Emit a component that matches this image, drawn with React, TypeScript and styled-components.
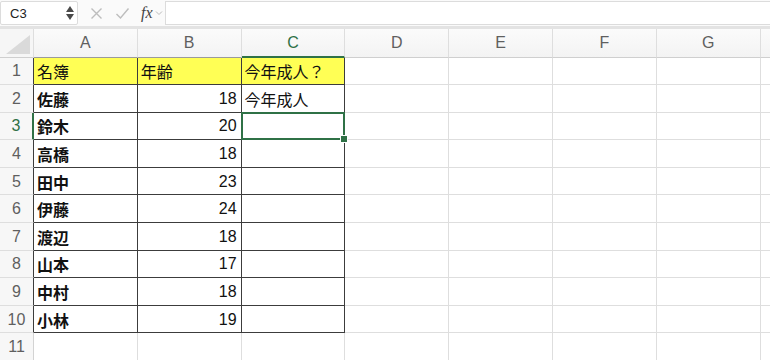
import styled, { createGlobalStyle, css } from 'styled-components';

const GlobalStyle = createGlobalStyle`
  html, body {
    margin: 0;
    padding: 0;
    background: #ffffff;
  }
  body {
    font-family: "Liberation Sans", "Noto Sans CJK JP", sans-serif;
    overflow: hidden;
  }
`;

const COL_W = 103.8;
const ROW_H = 27.6;
const HEAD_W = 34;
const GRID_LINE = '#dedede';
const TABLE_LINE = '#3c3c3c';
const GREEN = '#2f7146';

const columns = ['A', 'B', 'C', 'D', 'E', 'F', 'G', 'H'];

const rows: [string, string, string][] = [
  ['名簿', '年齢', '今年成人？'],
  ['佐藤', '18', '今年成人'],
  ['鈴木', '20', ''],
  ['高橋', '18', ''],
  ['田中', '23', ''],
  ['伊藤', '24', ''],
  ['渡辺', '18', ''],
  ['山本', '17', ''],
  ['中村', '18', ''],
  ['小林', '19', ''],
  ['', '', ''],
];

const Page = styled.div`
  width: 770px;
  height: 360px;
  overflow: hidden;
  display: flex;
  flex-direction: column;
`;

const FormulaBar = styled.div`
  flex-shrink: 0;
  height: 26px;
  display: flex;
  align-items: center;
  background: #fafafa;
  border-bottom: 3px solid #e3e3e3;
`;

const NameBox = styled.div`
  width: 78px;
  height: 24px;
  box-sizing: border-box;
  border: 1px solid #dcdcdc;
  border-radius: 2px;
  background: #fff;
  display: flex;
  align-items: center;
  justify-content: space-between;
  padding: 0 3px 0 9px;
  font-size: 13px;
  color: #222;
`;

const Spinner = styled.div`
  display: flex;
  flex-direction: column;
  align-items: center;
  gap: 2px;
`;

const Arrow = styled.span<{ $down?: boolean }>`
  width: 0;
  height: 0;
  border-left: 4px solid transparent;
  border-right: 4px solid transparent;
  ${({ $down }) =>
    $down
      ? css`border-top: 6px solid #4a4a4a;`
      : css`border-bottom: 6px solid #4a4a4a;`}
`;

const Tools = styled.div`
  display: flex;
  align-items: center;
  gap: 12px;
  padding: 0 0 0 12px;
  color: #bdbdbd;
`;

const Fx = styled.span`
  display: flex;
  align-items: center;
  gap: 2px;
  margin-left: -1px;
  font-family: "Liberation Serif", serif;
  font-style: italic;
  font-size: 16px;
  color: #444;
`;

const FormulaInput = styled.div`
  flex: 1;
  height: 24px;
  box-sizing: border-box;
  margin-left: 2px;
  border: 1px solid #dcdcdc;
  border-right: none;
  background: #fff;
`;

const Sheet = styled.div`
  flex-shrink: 0;
  display: grid;
  grid-template-columns: ${HEAD_W}px repeat(${columns.length}, ${COL_W}px);
  grid-template-rows: 28.5px repeat(${rows.length}, ${ROW_H}px);
`;

const Corner = styled.div`
  background: #f6f6f6;
  border-right: 1px solid ${GRID_LINE};
  border-bottom: 1px solid #cfcfcf;
  box-sizing: border-box;
  display: flex;
  align-items: flex-end;
  justify-content: flex-end;
  padding: 0 3px 3px 0;
`;

const Triangle = styled.span`
  width: 0;
  height: 0;
  border-left: 24px solid transparent;
  border-bottom: 19px solid #dadada;
`;

const ColHead = styled.div<{ $active?: boolean; $table?: boolean }>`
  box-sizing: border-box;
  background: linear-gradient(#fbfbfb, #f3f3f3);
  border-right: 1px solid ${GRID_LINE};
  border-bottom: ${({ $active, $table }) =>
    $active ? `2px solid ${GREEN}` : `1px solid ${$table ? '#9a9a9a' : '#cfcfcf'}`};
  display: flex;
  align-items: center;
  justify-content: center;
  font-size: 16px;
  color: ${({ $active }) => ($active ? GREEN : '#5f5f5f')};
  padding-top: ${({ $active }) => ($active ? '1px' : '0')};
`;

const RowHead = styled.div<{ $active?: boolean; $table?: boolean }>`
  box-sizing: border-box;
  background: #f7f7f7;
  border-bottom: 1px solid ${GRID_LINE};
  border-right: ${({ $active, $table }) =>
    $active ? `2px solid ${GREEN}` : `1px solid ${$table ? TABLE_LINE : '#d3d3d3'}`};
  display: flex;
  align-items: center;
  justify-content: center;
  padding-top: 1px;
  font-size: 16px;
  color: ${({ $active }) => ($active ? GREEN : '#5f5f5f')};
`;

const Cell = styled.div<{
  $table?: boolean;
  $head?: boolean;
  $num?: boolean;
  $bold?: boolean;
  $selected?: boolean;
}>`
  position: relative;
  box-sizing: border-box;
  border-right: 1px solid ${({ $table }) => ($table ? TABLE_LINE : GRID_LINE)};
  border-bottom: 1px solid ${({ $table }) => ($table ? TABLE_LINE : GRID_LINE)};
  background: ${({ $head }) => ($head ? '#ffff55' : '#fff')};
  display: flex;
  align-items: center;
  justify-content: ${({ $num }) => ($num ? 'flex-end' : 'flex-start')};
  padding: 1px 4px 0 3px;
  font-family: "Liberation Sans", "Noto Sans CJK JP", sans-serif;
  font-size: 16px;
  font-weight: ${({ $bold }) => ($bold ? 700 : 400)};
  color: #111;
  white-space: nowrap;

  ${({ $selected }) =>
    $selected &&
    css`
      &::after {
        content: '';
        position: absolute;
        left: -1px;
        top: -1px;
        right: -1px;
        bottom: -1px;
        border: 2px solid ${GREEN};
        pointer-events: none;
      }
      &::before {
        content: '';
        position: absolute;
        right: -4px;
        bottom: -4px;
        width: 6px;
        height: 6px;
        background: ${GREEN};
        border: 1px solid #fff;
        z-index: 2;
      }
    `}
`;

function XIcon() {
  return (
    <svg width="13" height="13" viewBox="0 0 13 13" fill="none" stroke="currentColor" strokeWidth="1.4">
      <path d="M1.5 1.5 L11.5 11.5 M11.5 1.5 L1.5 11.5" />
    </svg>
  );
}

function CheckIcon() {
  return (
    <svg width="15" height="13" viewBox="0 0 15 13" fill="none" stroke="currentColor" strokeWidth="1.4">
      <path d="M1.5 7 L5.5 11 L13.5 1.5" />
    </svg>
  );
}

function Chevron() {
  return (
    <svg width="8" height="6" viewBox="0 0 8 6" fill="none" stroke="#bbb" strokeWidth="1">
      <path d="M1 1.5 L4 4.5 L7 1.5" />
    </svg>
  );
}

export default function App() {
  return (
    <Page>
      <GlobalStyle />
      <FormulaBar>
        <NameBox>
          C3
          <Spinner>
            <Arrow />
            <Arrow $down />
          </Spinner>
        </NameBox>
        <Tools>
          <XIcon />
          <CheckIcon />
          <Fx>
            fx
            <Chevron />
          </Fx>
        </Tools>
        <FormulaInput />
      </FormulaBar>
      <Sheet>
        <Corner>
          <Triangle />
        </Corner>
        {columns.map((c, i) => (
          <ColHead key={c} $active={c === 'C'} $table={i < 3}>
            {c === 'H' ? '' : c}
          </ColHead>
        ))}
        {rows.map((r, ri) => {
          const rowNo = ri + 1;
          const inTable = rowNo <= 10;
          return [
            <RowHead key={`h${rowNo}`} $active={rowNo === 3} $table={inTable}>
              {rowNo}
            </RowHead>,
            ...columns.map((c, ci) => {
              const table = inTable && ci < 3;
              const value = ci < 3 ? r[ci] : '';
              return (
                <Cell
                  key={`${c}${rowNo}`}
                  $table={table}
                  $head={rowNo === 1 && ci < 3}
                  $num={ci === 1 && rowNo > 1}
                  $bold={ci === 0 && rowNo > 1}
                  $selected={c === 'C' && rowNo === 3}
                >
                  {value}
                </Cell>
              );
            }),
          ];
        })}
      </Sheet>
    </Page>
  );
}
